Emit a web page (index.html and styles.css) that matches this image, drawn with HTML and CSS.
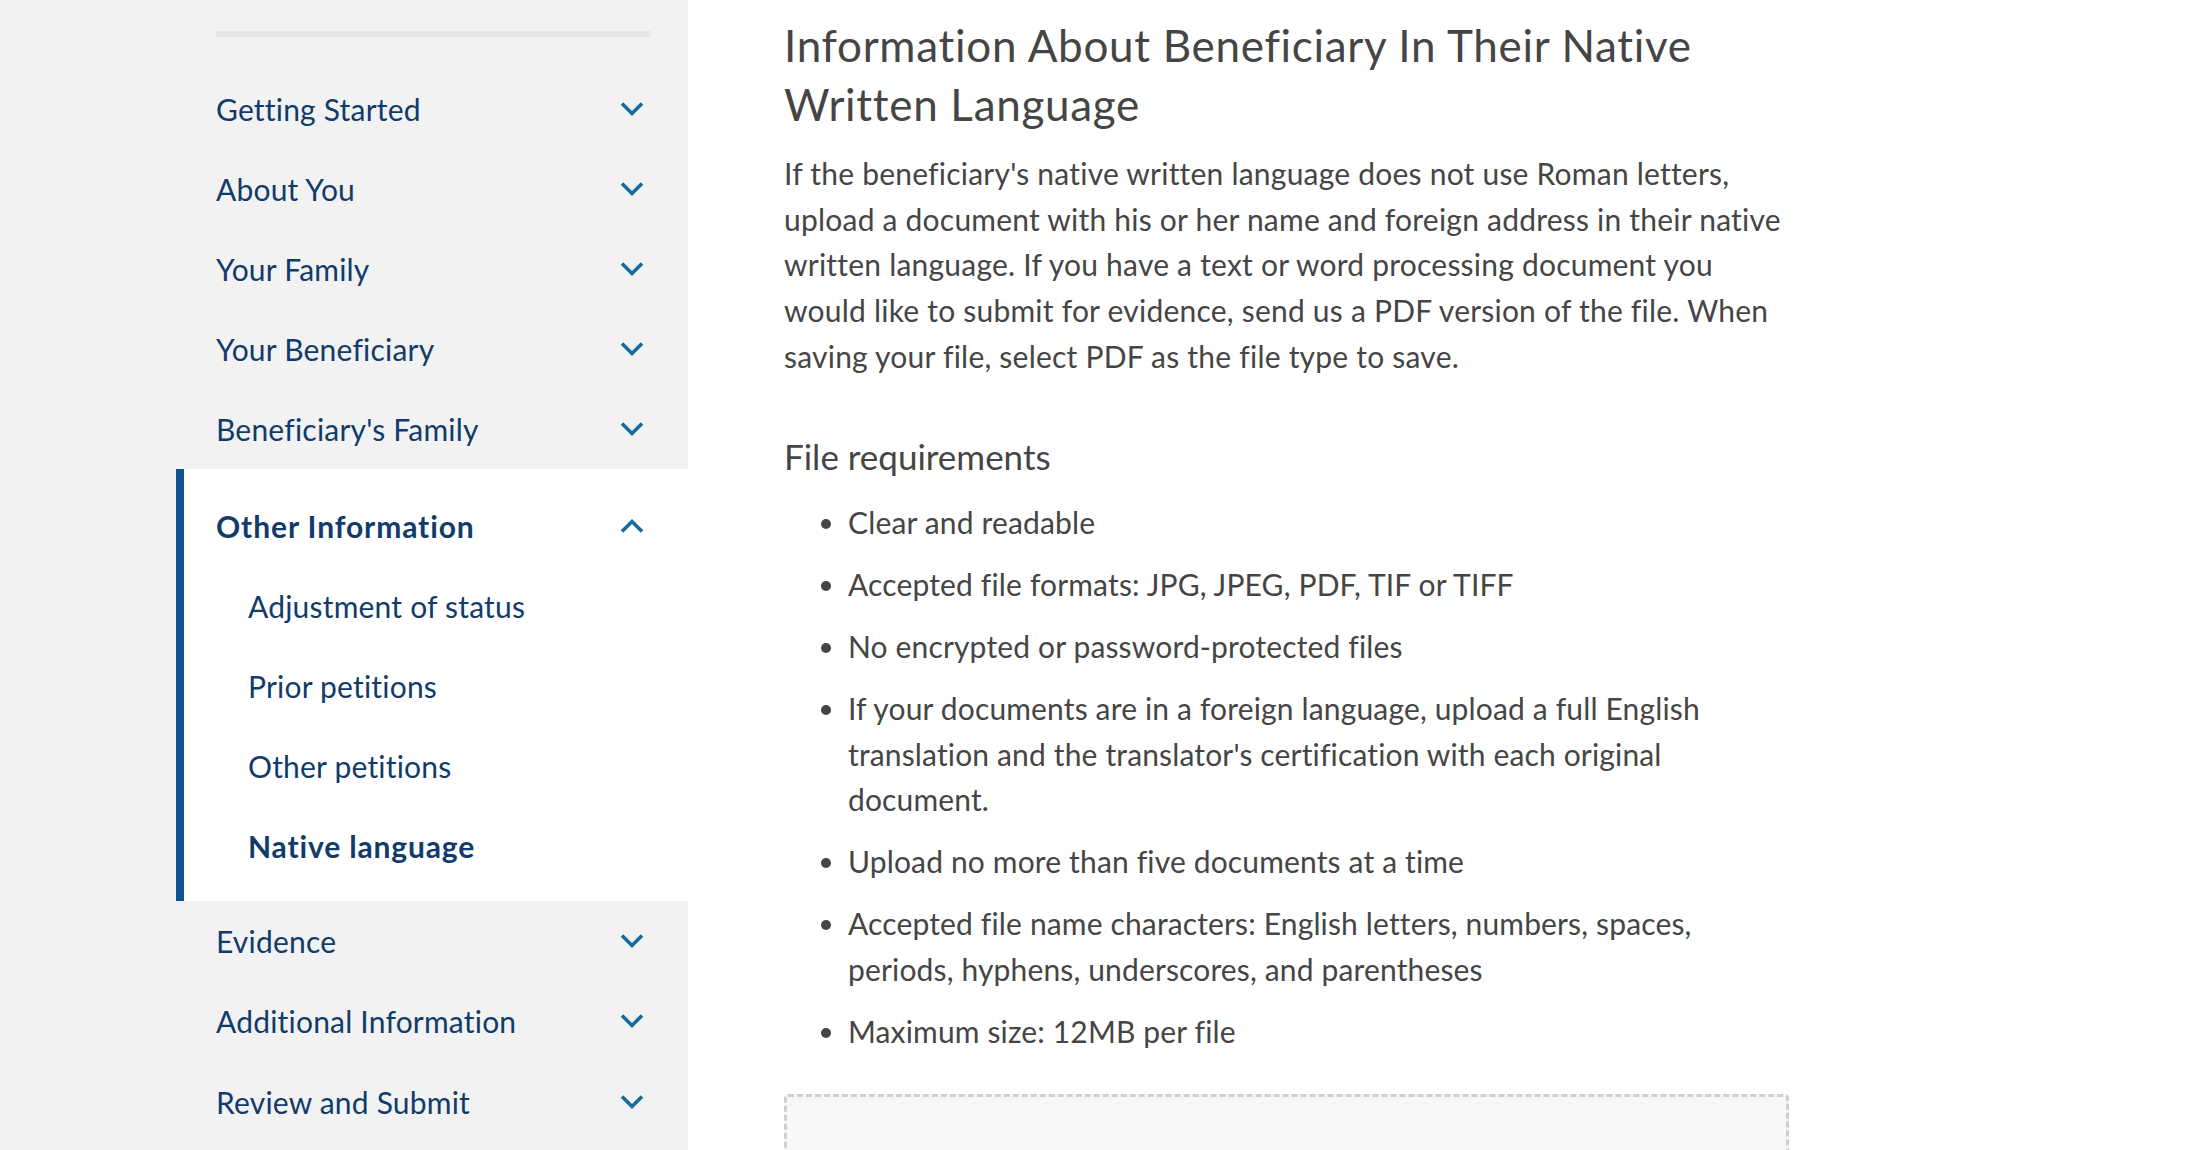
FILE: index.html
```html
<!DOCTYPE html>
<html lang="en">
<head>
<meta charset="utf-8">
<title>Native language</title>
<link rel="stylesheet" href="styles.css">
</head>
<body>
<div class="layout">
  <aside class="sidebar">
    <div class="sidebar-inner">
      <div class="progress-line"></div>
      <ul class="nav">
        <li class="nav-item"><span>Getting Started</span><svg class="chev" viewBox="0 0 24 16"><path d="M2 2.5 L12 12.5 L22 2.5"/></svg></li>
        <li class="nav-item"><span>About You</span><svg class="chev" viewBox="0 0 24 16"><path d="M2 2.5 L12 12.5 L22 2.5"/></svg></li>
        <li class="nav-item"><span>Your Family</span><svg class="chev" viewBox="0 0 24 16"><path d="M2 2.5 L12 12.5 L22 2.5"/></svg></li>
        <li class="nav-item"><span>Your Beneficiary</span><svg class="chev" viewBox="0 0 24 16"><path d="M2 2.5 L12 12.5 L22 2.5"/></svg></li>
        <li class="nav-item"><span>Beneficiary's Family</span><svg class="chev" viewBox="0 0 24 16"><path d="M2 2.5 L12 12.5 L22 2.5"/></svg></li>
        <li class="nav-group">
          <div class="nav-item nav-item-open"><span>Other Information</span><svg class="chev" viewBox="0 0 24 16"><path d="M2 13.5 L12 3.5 L22 13.5"/></svg></div>
          <ul class="subnav">
            <li class="sub-item">Adjustment of status</li>
            <li class="sub-item">Prior petitions</li>
            <li class="sub-item">Other petitions</li>
            <li class="sub-item sub-item-current">Native language</li>
          </ul>
        </li>
        <li class="nav-item"><span>Evidence</span><svg class="chev" viewBox="0 0 24 16"><path d="M2 2.5 L12 12.5 L22 2.5"/></svg></li>
        <li class="nav-item"><span>Additional Information</span><svg class="chev" viewBox="0 0 24 16"><path d="M2 2.5 L12 12.5 L22 2.5"/></svg></li>
        <li class="nav-item"><span>Review and Submit</span><svg class="chev" viewBox="0 0 24 16"><path d="M2 2.5 L12 12.5 L22 2.5"/></svg></li>
      </ul>
    </div>
  </aside>
  <main class="content">
    <h1 class="title">Information About Beneficiary In Their Native Written Language</h1>
    <p class="intro">If the beneficiary's native written language does not use Roman letters, upload a document with his or her name and foreign address in their native written language. If you have a text or word processing document you would like to submit for evidence, send us a PDF version of the file. When saving your file, select PDF as the file type to save.</p>
    <h2 class="subtitle">File requirements</h2>
    <ul class="reqs">
      <li>Clear and readable</li>
      <li>Accepted file formats: JPG, JPEG, PDF, TIF or TIFF</li>
      <li>No encrypted or password-protected files</li>
      <li>If your documents are in a foreign language, upload a full English translation and the translator's certification with each original document.</li>
      <li>Upload no more than five documents at a time</li>
      <li>Accepted file name characters: English letters, numbers, spaces, periods, hyphens, underscores, and parentheses</li>
      <li>Maximum size: 12MB per file</li>
    </ul>
    <div class="dropzone"></div>
  </main>
</div>
</body>
</html>
```
FILE: styles.css
```css
html, body {
  margin: 0;
  padding: 0;
  background: #ffffff;
}
body {
  font-family: Lato, "Open Sans", sans-serif;
  color: #454545;
  height: 1150px;
  overflow: hidden;
}
.layout {
  display: flex;
  align-items: stretch;
  min-height: 1150px;
}
.sidebar {
  width: 688px;
  flex: 0 0 688px;
  background: #f2f2f2;
}
.sidebar-inner {
  padding-left: 176px;
  padding-top: 31px;
}
.progress-line {
  height: 6px;
  width: 435px;
  margin-left: 40px;
  background: #e6e6e6;
}
.nav {
  list-style: none;
  margin: 32px 0 0 0;
  padding: 0;
}
.nav-item {
  display: flex;
  align-items: center;
  justify-content: space-between;
  height: 80px;
  padding: 0 44px 0 40px;
  font-size: 30px;
  letter-spacing: 0.2px;
  color: #113b6a;
}
.nav-item:last-child {
  height: 81px;
}
.chev {
  width: 24px;
  height: 16px;
  flex: 0 0 24px;
}
.chev path {
  fill: none;
  stroke: #1b6a9c;
  stroke-width: 3.6;
}
.nav-group {
  background: #ffffff;
  border-left: 8px solid #0e5494;
  padding: 17px 0 15px 0;
}
.nav-group .nav-item {
  padding-left: 32px;
}
.nav-item-open {
  font-weight: 700;
  letter-spacing: 0.9px;
}
.subnav {
  list-style: none;
  margin: 0;
  padding: 0;
}
.sub-item {
  display: flex;
  align-items: center;
  height: 80px;
  padding-left: 64px;
  font-size: 30px;
  letter-spacing: 0.2px;
  color: #113b6a;
}
.sub-item-current {
  font-weight: 700;
  letter-spacing: 0.85px;
}
.content {
  width: 1005px;
  margin-left: 96px;
  padding-top: 16px;
}
.title {
  margin: 0;
  font-size: 44px;
  line-height: 59px;
  letter-spacing: 0.7px;
  font-weight: 400;
  color: #454545;
}
.intro {
  margin: 17px 0 0 0;
  font-size: 30px;
  line-height: 45.7px;
  letter-spacing: 0.22px;
}
.subtitle {
  margin: 54px 0 0 0;
  font-size: 35px;
  line-height: 45.5px;
  font-weight: 400;
  color: #454545;
}
.reqs {
  margin: 21px 0 0 0;
  padding-left: 64px;
  font-size: 30px;
  line-height: 45.7px;
  letter-spacing: 0.15px;
}
.reqs li + li {
  margin-top: 16.3px;
}
.dropzone {
  margin-top: 39px;
  height: 300px;
  border: 3px dashed #cfcfcf;
  border-radius: 4px;
  background: #f7f7f7;
}
```
